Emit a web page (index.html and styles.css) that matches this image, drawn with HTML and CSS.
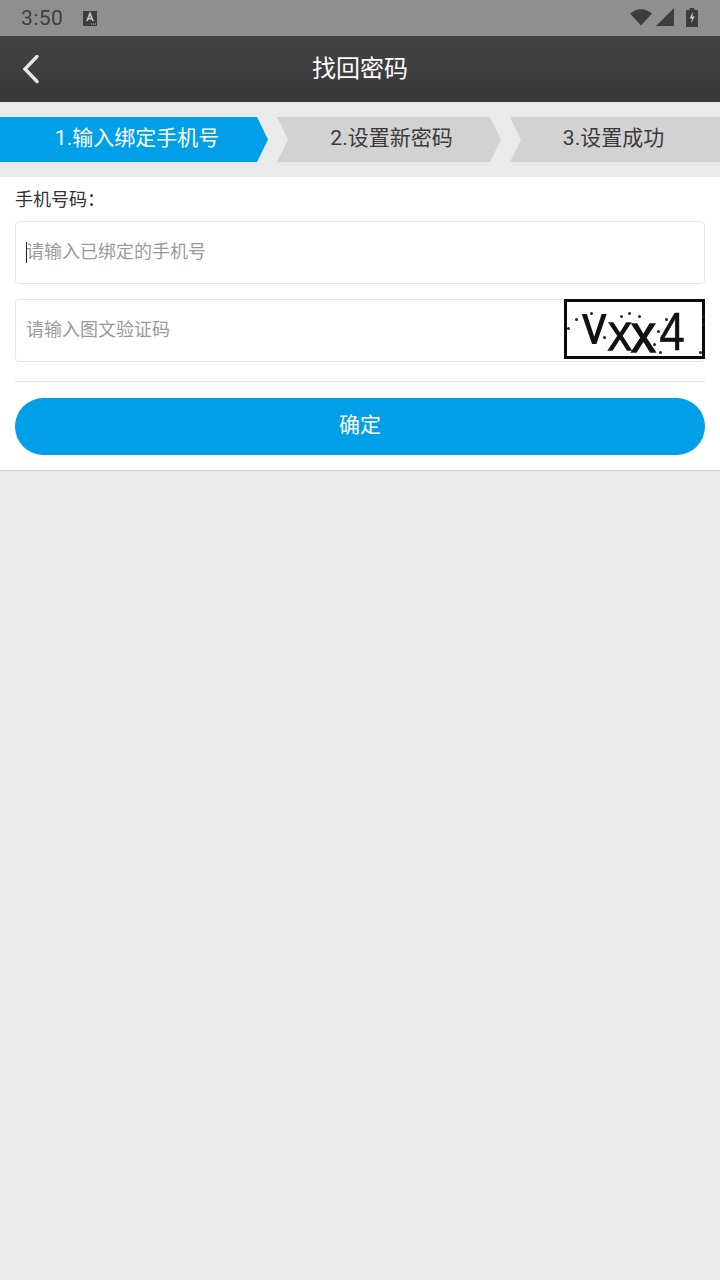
FILE: index.html
```html
<!DOCTYPE html>
<html lang="zh">
<head>
<meta charset="utf-8">
<title>找回密码</title>
<link rel="stylesheet" href="styles.css">
</head>
<body>
<div class="status">
  <span class="time">3:50</span>
  <svg class="a-icon" width="16" height="16" viewBox="0 0 16 16"><rect x="1" y="1" width="14" height="15" fill="#3d3d3d"/><path d="M5 11 L8 3.5 L11 11 M6.2 8.6 H9.8" fill="none" stroke="#c9c9c9" stroke-width="1.6"/><path d="M9 14h1M11 14h1M13 14h1" stroke="#c9c9c9" stroke-width="1"/></svg>
  <span class="status-right">
    <svg class="wifi" width="24" height="18" viewBox="0 0 24 18"><path d="M1 5.5 Q12 -3 23 5.5 L12 17.5 Z" fill="#3d3d3d"/></svg>
    <svg class="signal" width="18" height="18" viewBox="0 0 18 18"><path d="M0 18 L18 0 V18 Z" fill="#3d3d3d"/></svg>
    <svg class="battery" width="12" height="20" viewBox="0 0 12 20"><path d="M0 3 H3.5 V1 H8.5 V3 H12 V20 H0 Z" fill="#3d3d3d"/><path d="M7 5 L3.5 11.5 H6 L5 16.5 L8.8 9.5 H6.4 Z" fill="#c4c4c4"/></svg>
  </span>
</div>
<header class="nav">
  <svg class="back" width="24" height="34" viewBox="0 0 24 34"><path d="M17 4.5 L5 17 L17 29.5" fill="none" stroke="#e6e6e6" stroke-width="3.4" stroke-linecap="round" stroke-linejoin="miter"/></svg>
  <h1 class="title">找回密码</h1>
</header>
<nav class="steps">
  <div class="step step-first active">1.输入绑定手机号</div>
  <div class="step step-second">2.设置新密码</div>
  <div class="step step-third">3.设置成功</div>
</nav>
<main class="card">
  <div class="label">手机号码：</div>
  <div class="field field-phone"><span class="caret"></span><span class="placeholder">请输入已绑定的手机号</span></div>
  <div class="field field-code">
    <span class="placeholder">请输入图文验证码</span>
    <div class="captcha">
      <span class="cap cap-v">V</span><span class="cap cap-x1">X</span><span class="cap cap-x2">x</span><span class="cap cap-4">4</span>
      <i class="dot d1"></i><i class="dot d2"></i><i class="dot d3"></i><i class="dot d4"></i><i class="dot d5"></i><i class="dot d6"></i><i class="dot d7"></i><i class="dot d8"></i><i class="dot d9"></i><i class="dot d10"></i><i class="dot d11"></i><i class="dot d12"></i><i class="dot d13"></i><i class="dot d14"></i>
    </div>
  </div>
  <div class="divider"></div>
  <button class="submit">确定</button>
</main>
</body>
</html>
```
FILE: styles.css
```css
* { box-sizing: border-box; }
html, body { margin: 0; padding: 0; }
body {
  width: 720px;
  height: 1280px;
  overflow: hidden;
  background: #eaeaea;
  font-family: "Roboto", "Noto Sans CJK SC", sans-serif;
}
.status {
  height: 36px;
  background: #8f8f8f;
  display: flex;
  align-items: center;
  padding: 0 22px 0 21px;
  color: #3f3f3f;
}
.time { font-size: 21px; line-height: 40px; width: 61px; letter-spacing: 0.4px; }
.a-icon { margin-top: -1px; }
.status-right { margin-left: auto; display: flex; align-items: center; margin-top: -2px; }
.signal { margin-left: 3px; }
.battery { margin-left: 12px; }
.nav {
  height: 66px;
  background: linear-gradient(#444444, #383838);
  display: flex;
  align-items: center;
  justify-content: center;
  position: relative;
  padding-bottom: 6px;
}
.back { position: absolute; left: 20px; top: 16px; }
.title { margin: 0; color: #fff; font-size: 24px; font-weight: 400; }
.steps {
  height: 75px;
  padding-top: 15px;
  display: flex;
  gap: 9px;
  overflow: hidden;
}
.step {
  height: 45px;
  background: #d2d2d2;
  color: #3a3a3a;
  font-size: 21px;
  line-height: 42px;
  text-align: center;
  white-space: nowrap;
  flex: none;
}
.step-first {
  width: 268px;
  background: #009fe8;
  color: #fff;
  padding-left: 6px;
  clip-path: polygon(0 0, 257px 0, 100% 50%, 257px 100%, 0 100%);
}
.step-second {
  width: 224px;
  padding-left: 5px;
  clip-path: polygon(0 0, 213px 0, 100% 50%, 213px 100%, 0 100%, 11px 50%);
}
.step-third {
  width: 210px;
  padding-right: 3px;
  clip-path: polygon(0 0, 100% 0, 100% 100%, 0 100%, 11px 50%);
}
.card {
  height: 294px;
  background: #fff;
  border-bottom: 1px solid #cfcfcf;
  padding: 0 15px;
  display: flex;
  flex-direction: column;
}
.label {
  font-size: 18px;
  line-height: 45px;
  height: 44px;
  color: #333;
}
.field {
  height: 63px;
  border: 1px solid #e6e6e6;
  border-radius: 4px;
  display: flex;
  align-items: center;
  padding: 0 0 6px 10px;
  position: relative;
  flex: none;
}
.placeholder { font-size: 18px; color: #9a9a9a; }
.caret {
  position: absolute;
  left: 10px;
  top: 20px;
  width: 1px;
  height: 21px;
  background: #222;
}
.field-code { margin-top: 15px; }
.captcha {
  position: absolute;
  right: -1px;
  top: -1px;
  width: 141px;
  height: 60px;
  border: 3px solid #0a0a0a;
  background: #fff;
}
.cap {
  position: absolute;
  font-family: "Liberation Sans", sans-serif;
  color: #111;
  line-height: 1;
  filter: blur(0.4px);
  -webkit-text-stroke: 1.4px #111;
}
.cap-v { left: 14px; top: 7px; font-size: 40px; transform: scaleX(0.86); -webkit-text-stroke-width: 1.8px; }
.cap-x1 { left: 40px; top: 16px; font-size: 38px; transform: scaleX(0.95); }
.cap-x2 { left: 63px; top: 4px; font-size: 54px; transform: scaleX(0.92); }
.cap-4 { left: 90px; top: 2px; font-size: 54px; transform: scaleX(0.85); -webkit-text-stroke-width: 0.5px; }
.dot { position: absolute; width: 3px; height: 3px; background: #222; border-radius: 50%; }
.d1 { left: 8px; top: 16px; }
.d2 { left: 23px; top: 10px; }
.d3 { left: 53px; top: 13px; }
.d4 { left: 61px; top: 10px; }
.d5 { left: 71px; top: 13px; }
.d6 { left: 135px; top: 13px; }
.d7 { left: 135px; top: 21px; }
.d8 { left: 132px; top: 49px; }
.d9 { left: 0; top: 25px; }
.d10 { left: 98px; top: 16px; }
.d11 { left: 36px; top: 34px; }
.d12 { left: 90px; top: 28px; }
.d13 { left: 86px; top: 41px; }
.d14 { left: 92px; top: 49px; }
.divider { height: 1px; background: #e4e4e4; margin-top: 19px; flex: none; }
.submit {
  margin-top: 16px;
  height: 57px;
  border: 0;
  border-radius: 29px;
  background: #009fe8;
  color: #fff;
  font-family: inherit;
  font-size: 21px;
  padding: 0 0 7px;
  flex: none;
}
```
